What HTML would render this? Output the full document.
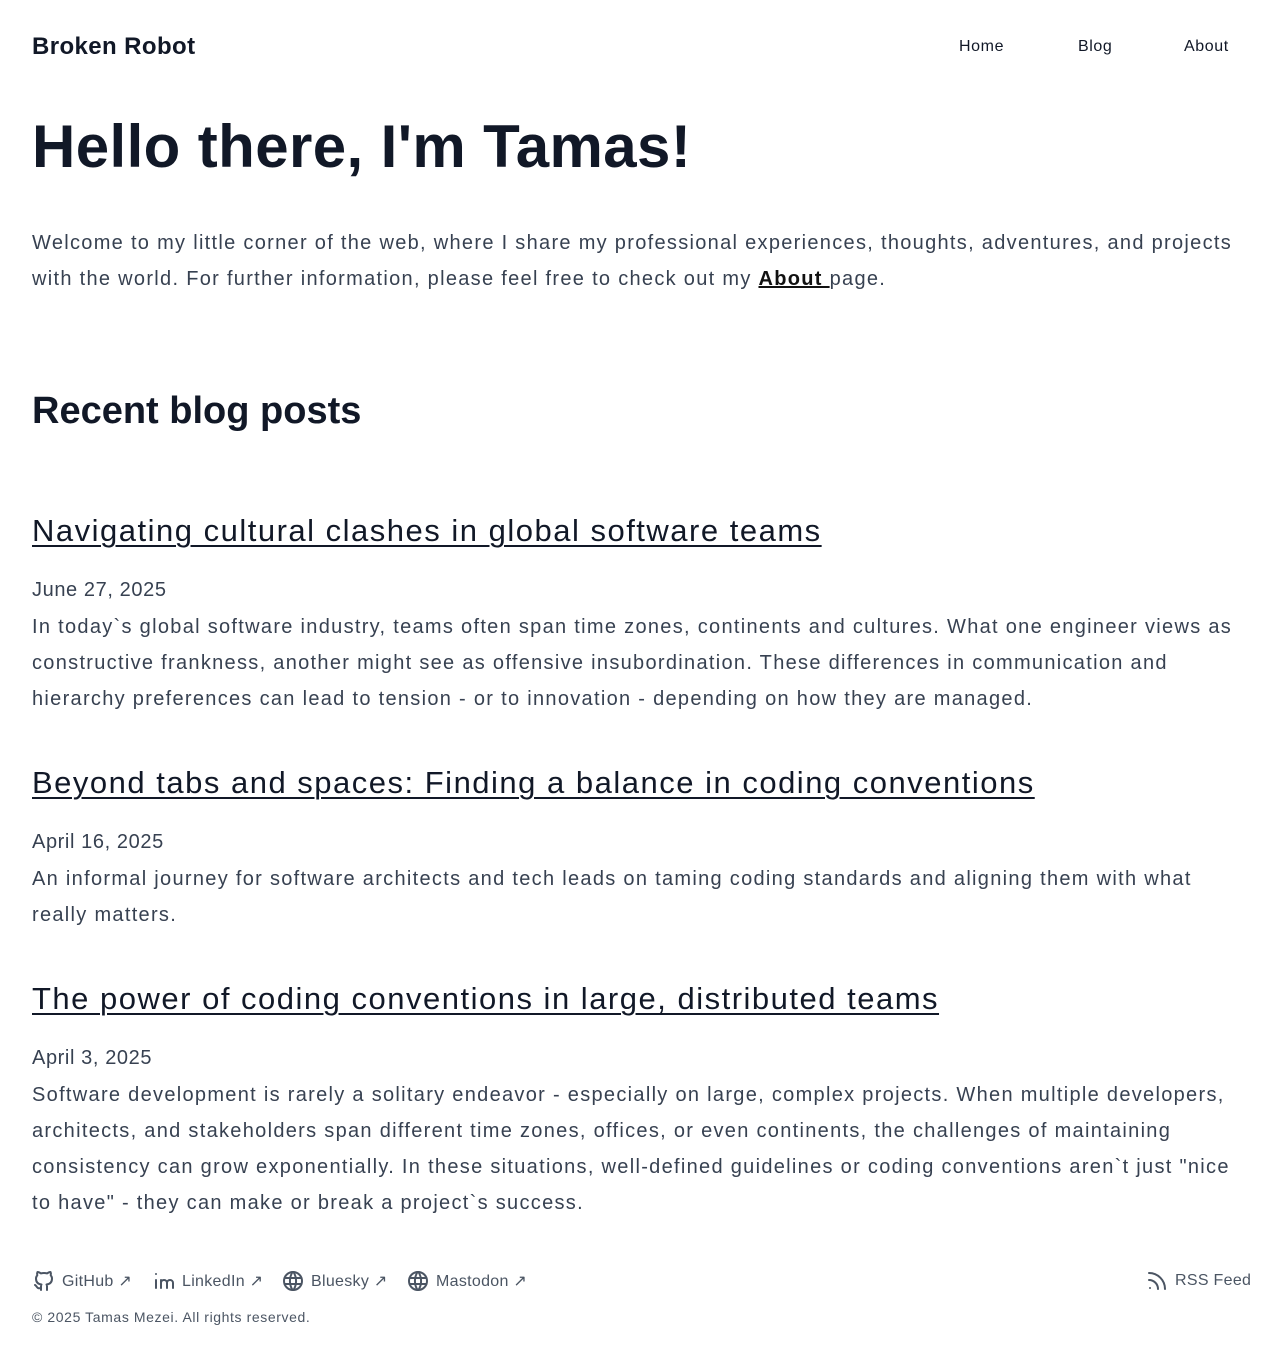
<!DOCTYPE html>
<html><head><meta charset="utf-8"><style>
body{margin:0;background:#fff;font-family:"Liberation Sans",sans-serif;color:#111827;}
.w{position:relative;width:1280px;height:1352px;}
.a{position:absolute;white-space:nowrap;}
.brand{left:32px;top:33px;font-size:24px;font-weight:bold;letter-spacing:0.4px;}
.nav{top:38px;font-size:16px;letter-spacing:0.6px;}
h1{position:absolute;left:32px;top:111px;margin:0;font-size:60px;font-weight:bold;letter-spacing:0.4px;line-height:72px;}
.p{font-size:20px;color:#374151;line-height:36px;letter-spacing:1.3px;left:32px;}
h2{position:absolute;left:32px;top:390px;margin:0;font-size:38px;font-weight:bold;letter-spacing:0px;}
.t{left:32px;font-size:31px;text-decoration:underline;text-decoration-thickness:2px;text-underline-offset:4px;letter-spacing:1.5px;}
.d{left:32px;font-size:20px;color:#374151;letter-spacing:0.6px;}
.f{top:1269px;font-size:16px;color:#4b5563;display:flex;align-items:center;gap:6px;letter-spacing:0.3px;}
svg{stroke:#4b5563;fill:none;stroke-width:2;stroke-linecap:round;stroke-linejoin:round}
</style></head><body><div class="w">
<div class="a brand">Broken Robot</div>
<div class="a nav" style="left:959px">Home</div>
<div class="a nav" style="left:1078px">Blog</div>
<div class="a nav" style="left:1184px">About</div>
<h1>Hello there, I'm Tamas!</h1>
<div class="a p" style="top:225px">Welcome to my little corner of the web, where I share my professional experiences, thoughts, adventures, and projects<br>with the world. For further information, please feel free to check out my <u style="color:#111;font-weight:bold">About </u>page.</div>
<h2>Recent blog posts</h2>
<div class="a t" style="top:513px">Navigating cultural clashes in global software teams</div>
<div class="a d" style="top:579px">June 27, 2025</div>
<div class="a p" style="top:609px">In today`s global software industry, teams often span time zones, continents and cultures. What one engineer views as<br>constructive frankness, another might see as offensive insubordination. These differences in communication and<br>hierarchy preferences can lead to tension - or to innovation - depending on how they are managed.</div>
<div class="a t" style="top:765px">Beyond tabs and spaces: Finding a balance in coding conventions</div>
<div class="a d" style="top:831px">April 16, 2025</div>
<div class="a p" style="top:861px">An informal journey for software architects and tech leads on taming coding standards and aligning them with what<br>really matters.</div>
<div class="a t" style="top:981px">The power of coding conventions in large, distributed teams</div>
<div class="a d" style="top:1047px">April 3, 2025</div>
<div class="a p" style="top:1077px">Software development is rarely a solitary endeavor - especially on large, complex projects. When multiple developers,<br>architects, and stakeholders span different time zones, offices, or even continents, the challenges of maintaining<br>consistency can grow exponentially. In these situations, well-defined guidelines or coding conventions aren`t just "nice<br>to have" - they can make or break a project`s success.</div>
<div class="a f" style="left:32px"><svg width="24" height="24" viewBox="0 0 24 24"><path d="M9 19c-4.3 1.4-4.3-2.5-6-3m12 5v-3.5c0-1 .1-1.4-.5-2 2.8-.3 5.5-1.4 5.5-6a4.6 4.6 0 0 0-1.3-3.2 4.2 4.2 0 0 0-.1-3.2s-1.1-.3-3.5 1.3a12.3 12.3 0 0 0-6.2 0C6.5 2.8 5.4 3.1 5.4 3.1a4.2 4.2 0 0 0-.1 3.2A4.6 4.6 0 0 0 4 9.5c0 4.6 2.7 5.7 5.5 6-.6.6-.6 1.2-.5 2V21"/></svg>GitHub ↗</div>
<div class="a f" style="left:152px"><svg width="24" height="24" viewBox="0 0 24 24"><path d="M4 11v8M4 5v.01M9 19v-8M15 19v-5a3 3 0 0 0-6 0M21 19v-5a3 3 0 0 0-6 0"/></svg>LinkedIn ↗</div>
<div class="a f" style="left:281px"><svg width="24" height="24" viewBox="0 0 24 24"><circle cx="12" cy="12" r="9"/><path d="M3.6 9h16.8M3.6 15h16.8M11.5 3a17 17 0 0 0 0 18M12.5 3a17 17 0 0 1 0 18"/></svg>Bluesky ↗</div>
<div class="a f" style="left:406px"><svg width="24" height="24" viewBox="0 0 24 24"><circle cx="12" cy="12" r="9"/><path d="M3.6 9h16.8M3.6 15h16.8M11.5 3a17 17 0 0 0 0 18M12.5 3a17 17 0 0 1 0 18"/></svg>Mastodon ↗</div>
<div class="a f" style="left:1145px"><svg width="24" height="24" viewBox="0 0 24 24"><path d="M5 19h.01M4 4a16 16 0 0 1 16 16M4 11a9 9 0 0 1 9 9"/></svg>RSS Feed</div>
<div class="a" style="left:32px;top:1309px;font-size:14px;color:#4b5563;letter-spacing:0.6px">© 2025 Tamas Mezei. All rights reserved.</div>
</div></body></html>
